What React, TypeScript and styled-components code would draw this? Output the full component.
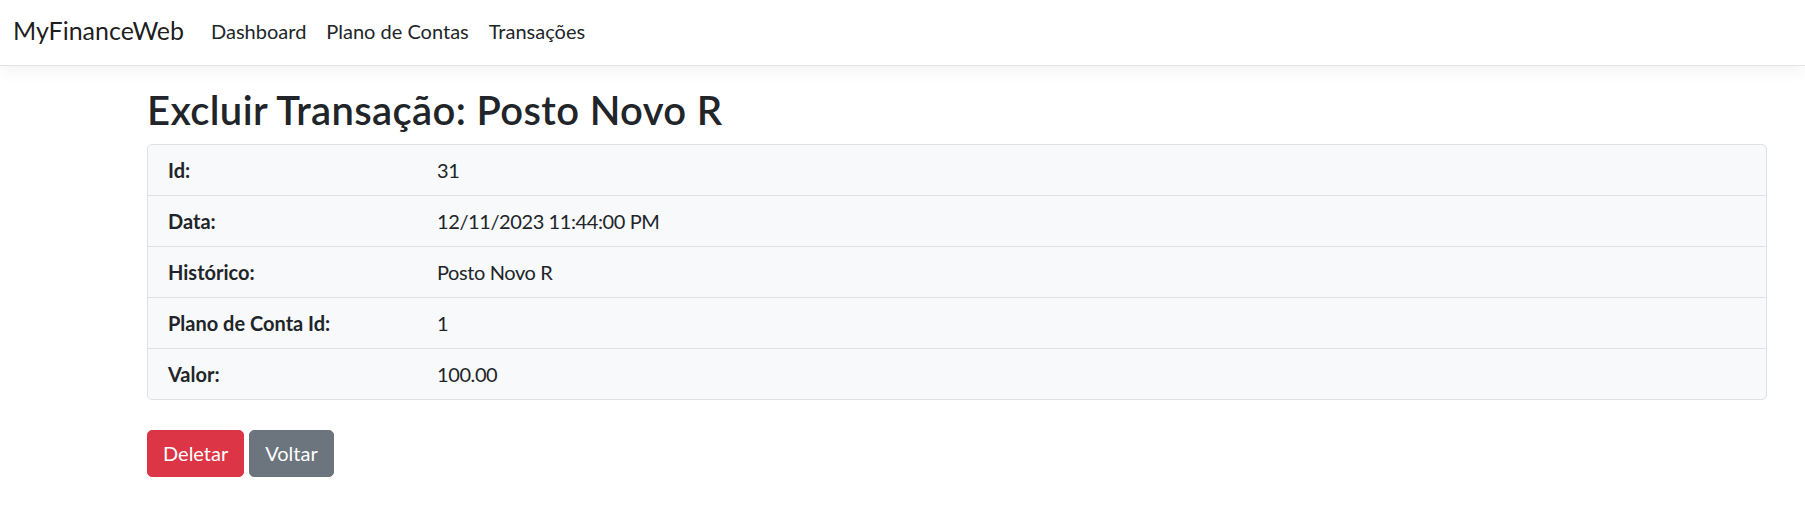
import React from "react";
import styled, { createGlobalStyle } from "styled-components";

const GlobalStyle = createGlobalStyle`
  html, body {
    margin: 0;
    padding: 0;
    background: #ffffff;
    color: #212529;
    font-family: "Lato", "Open Sans", "Noto Sans", sans-serif;
    font-size: 20px;
    line-height: 1.5;
  }
  * { box-sizing: border-box; }
`;

const Navbar = styled.nav`
  display: flex;
  align-items: center;
  height: 66px;
  padding: 0 12px 3px 13px;
  background: #ffffff;
  border-bottom: 1px solid #e3e3e3;
  box-shadow: 0 5px 15px rgba(0, 0, 0, 0.05);
`;

const Brand = styled.a`
  font-size: 25px;
  line-height: 37.5px;
  padding: 6px 0;
  color: rgba(0, 0, 0, 0.9);
  margin-right: 17px;
  text-decoration: none;
`;

const NavList = styled.ul`
  display: flex;
  list-style: none;
  margin: 0;
  padding: 0;
`;

const NavLink = styled.a`
  display: block;
  padding: 10px;
  font-size: 20px;
  line-height: 30px;
  color: #212529;
  text-decoration: none;
`;

const Main = styled.main`
  padding: 20px 38px 0 147px;
`;

const Title = styled.h1`
  margin: 0 0 10px;
  font-size: 40px;
  line-height: 48px;
  font-weight: 600;
  letter-spacing: 0.35px;
  color: #212529;
`;

const DetailCard = styled.dl`
  margin: 0;
  background: #f8f9fa;
  border: 1px solid #dee2e6;
  border-radius: 5px;
`;

const DetailRow = styled.div<{ $last?: boolean }>`
  display: grid;
  grid-template-columns: 269px 1fr;
  align-items: center;
  height: ${(p) => (p.$last ? "50px" : "51px")};
  padding: 0 20px;
  border-bottom: ${(p) => (p.$last ? "none" : "1px solid #dee2e6")};
`;

const Label = styled.dt`
  font-weight: 700;
  margin: 0;
`;

const Value = styled.dd`
  margin: 0;
  letter-spacing: -0.4px;
`;

const Actions = styled.form`
  display: flex;
  gap: 5px;
  margin: 30px 0 0;
`;

const Button = styled.button<{ $variant: "danger" | "secondary" }>`
  font-family: inherit;
  font-size: 20px;
  line-height: 30px;
  padding: 7px 15px 8px;
  border: 1px solid ${(p) => (p.$variant === "danger" ? "#dc3545" : "#6c757d")};
  border-radius: 5px;
  background: ${(p) => (p.$variant === "danger" ? "#dc3545" : "#6c757d")};
  color: #ffffff;
  cursor: pointer;
`;

const rows: [string, string][] = [
  ["Id:", "31"],
  ["Data:", "12/11/2023 11:44:00 PM"],
  ["Histórico:", "Posto Novo R"],
  ["Plano de Conta Id:", "1"],
  ["Valor:", "100.00"],
];

export default function App() {
  return (
    <>
      <GlobalStyle />
      <Navbar>
        <Brand href="#">MyFinanceWeb</Brand>
        <NavList>
          <li><NavLink href="#">Dashboard</NavLink></li>
          <li><NavLink href="#">Plano de Contas</NavLink></li>
          <li><NavLink href="#">Transações</NavLink></li>
        </NavList>
      </Navbar>
      <Main>
        <Title>Excluir Transação: Posto Novo R</Title>
        <DetailCard>
          {rows.map(([label, value], i) => (
            <DetailRow key={label} $last={i === rows.length - 1}>
              <Label>{label}</Label>
              <Value>{value}</Value>
            </DetailRow>
          ))}
        </DetailCard>
        <Actions onSubmit={(e) => e.preventDefault()}>
          <Button type="submit" $variant="danger">Deletar</Button>
          <Button type="button" $variant="secondary">Voltar</Button>
        </Actions>
      </Main>
    </>
  );
}
